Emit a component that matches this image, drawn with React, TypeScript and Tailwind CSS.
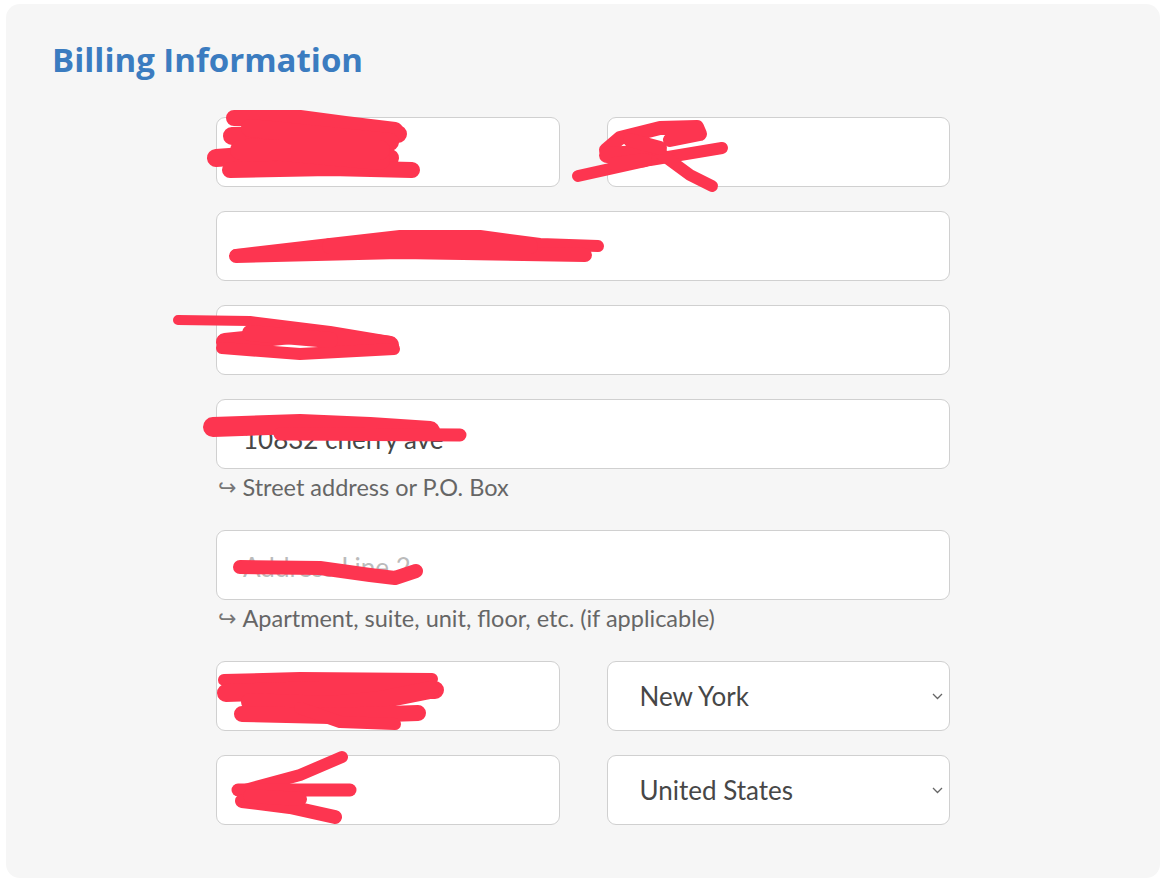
import type { ReactNode } from "react";

const font = { fontFamily: "Lato, 'Noto Sans', sans-serif" };

const Field = ({ children }: { children?: ReactNode }) => (
  <div className="h-[70px] rounded-[9px] border border-[#d0d0d0] bg-white px-[26px] flex items-center text-[26px] text-[#474747]">
    {children}
  </div>
);

const Select = ({ value }: { value: string }) => (
  <div className="h-[70px] rounded-[9px] border border-[#d0d0d0] bg-white pl-[32px] pr-[6px] flex items-center justify-between text-[26px] text-[#474747]">
    <span>{value}</span>
    <svg width="11" height="7" viewBox="0 0 11 7">
      <path d="M1 1l4.5 4.5L10 1" fill="none" stroke="#666" strokeWidth="1.3" />
    </svg>
  </div>
);

const Help = ({ text }: { text: string }) => (
  <div className="mt-[5px] mb-[28px] h-[28px] flex items-center text-[23.5px] text-[#666] leading-none pl-[2px]">
    <span className="mr-[6px] text-[22px] text-[#777]" style={{ fontFamily: "'DejaVu Sans', sans-serif" }}>
      ↪
    </span>
    {text}
  </div>
);

// redaction scribbles, drawn in page coordinates
const Scribbles = () => (
  <svg
    className="absolute inset-0 pointer-events-none"
    width="1170"
    height="882"
    viewBox="0 0 1170 882"
  >
    <g stroke="#fd3550" strokeLinecap="round" strokeLinejoin="round" fill="none">
      {/* first name */}
      <path d="M234 118 L300 118 L345 124 L395 130" strokeWidth="16" />
      <path d="M232 136 L300 134 L398 134" strokeWidth="18" />
      <path d="M250 128 L390 142" strokeWidth="18" />
      <path d="M216 158 L300 152 L390 158" strokeWidth="18" />
      <path d="M230 170 L330 168 L412 170" strokeWidth="16" />
      <path d="M250 148 L380 160" strokeWidth="20" />
      <path d="M240 150 L380 150" strokeWidth="20" />
      {/* last name */}
      <path d="M578 176 L650 160 L722 148" strokeWidth="12" />
      <path d="M606 150 L620 138 L660 128 L697 127 L700 134 L670 140" strokeWidth="14" />
      <path d="M607 155 L655 152" strokeWidth="16" />
      <path d="M656 150 L690 175 L712 186" strokeWidth="12" />
      <path d="M615 164 L645 160" strokeWidth="14" />
      <path d="M630 140 L660 148" strokeWidth="14" />
      {/* email */}
      <path d="M236 255 L330 244 L400 236 L480 236 L540 244 L598 246" strokeWidth="12" />
      <path d="M236 256 L400 252 L585 255" strokeWidth="14" />
      <path d="M330 246 L530 246" strokeWidth="16" />
      {/* phone */}
      <path d="M178 320 L250 321 L330 331 L390 341" strokeWidth="10" />
      <path d="M225 342 L300 334 L390 345" strokeWidth="18" />
      <path d="M222 348 L300 354 L394 349" strokeWidth="12" />
      <path d="M250 333 L330 340" strokeWidth="16" />
      {/* address */}
      <path d="M213 427 L300 424 L370 427 L430 431" strokeWidth="20" />
      <path d="M280 434 L460 435" strokeWidth="13" />
      {/* address line 2 */}
      <path d="M240 567 L320 568 L370 575 L395 578 L416 571" strokeWidth="14" />
      {/* city */}
      <path d="M224 680 L300 678 L432 679" strokeWidth="12" />
      <path d="M226 693 L320 690 L435 690" strokeWidth="18" />
      <path d="M250 702 L330 705 L380 700 L430 690" strokeWidth="18" />
      <path d="M242 714 L330 716 L418 713" strokeWidth="16" />
      <path d="M300 708 L340 722 L395 724" strokeWidth="12" />
      {/* zip */}
      <path d="M342 757 L300 775 L245 790" strokeWidth="12" />
      <path d="M238 790 L350 790" strokeWidth="13" />
      <path d="M242 801 L290 807 L335 817" strokeWidth="14" />
      <path d="M250 796 L300 799" strokeWidth="14" />
    </g>
  </svg>
);

export default function App() {
  return (
    <div className="relative w-[1170px] h-[882px] bg-white pt-[4px] pl-[6px] pr-[10px]" style={font}>
      <div className="h-[874px] rounded-[14px] bg-[#f6f6f6] pt-[34px] pl-[46px]">
        {/* TITLE */}
        <h1
          className="text-[33px] font-bold text-[#3b7cc0] leading-[44px]"
          style={{ fontFamily: "'Open Sans', sans-serif" }}
        >
          Billing Information
        </h1>

        {/* FORM */}
        <div className="ml-[164px] mt-[35px] w-[734px] flex flex-col">
          <div className="grid grid-cols-2 gap-[47px]">
            <Field />
            <Field />
          </div>

          <div className="mt-[24px]">
            <Field />
          </div>

          <div className="mt-[24px]">
            <Field />
          </div>

          <div className="mt-[24px]">
            <Field>
              <span className="pt-[10px]">10832 cherry ave</span>
            </Field>
            <Help text="Street address or P.O. Box" />
          </div>

          <div>
            <Field>
              <span className="text-[#bbb] pt-[4px]">Address Line 2</span>
            </Field>
            <Help text="Apartment, suite, unit, floor, etc. (if applicable)" />
          </div>

          <div className="grid grid-cols-2 gap-[47px]">
            <Field />
            <Select value="New York" />
          </div>

          <div className="mt-[24px] grid grid-cols-2 gap-[47px]">
            <Field />
            <Select value="United States" />
          </div>
        </div>
      </div>

      <Scribbles />
    </div>
  );
}
